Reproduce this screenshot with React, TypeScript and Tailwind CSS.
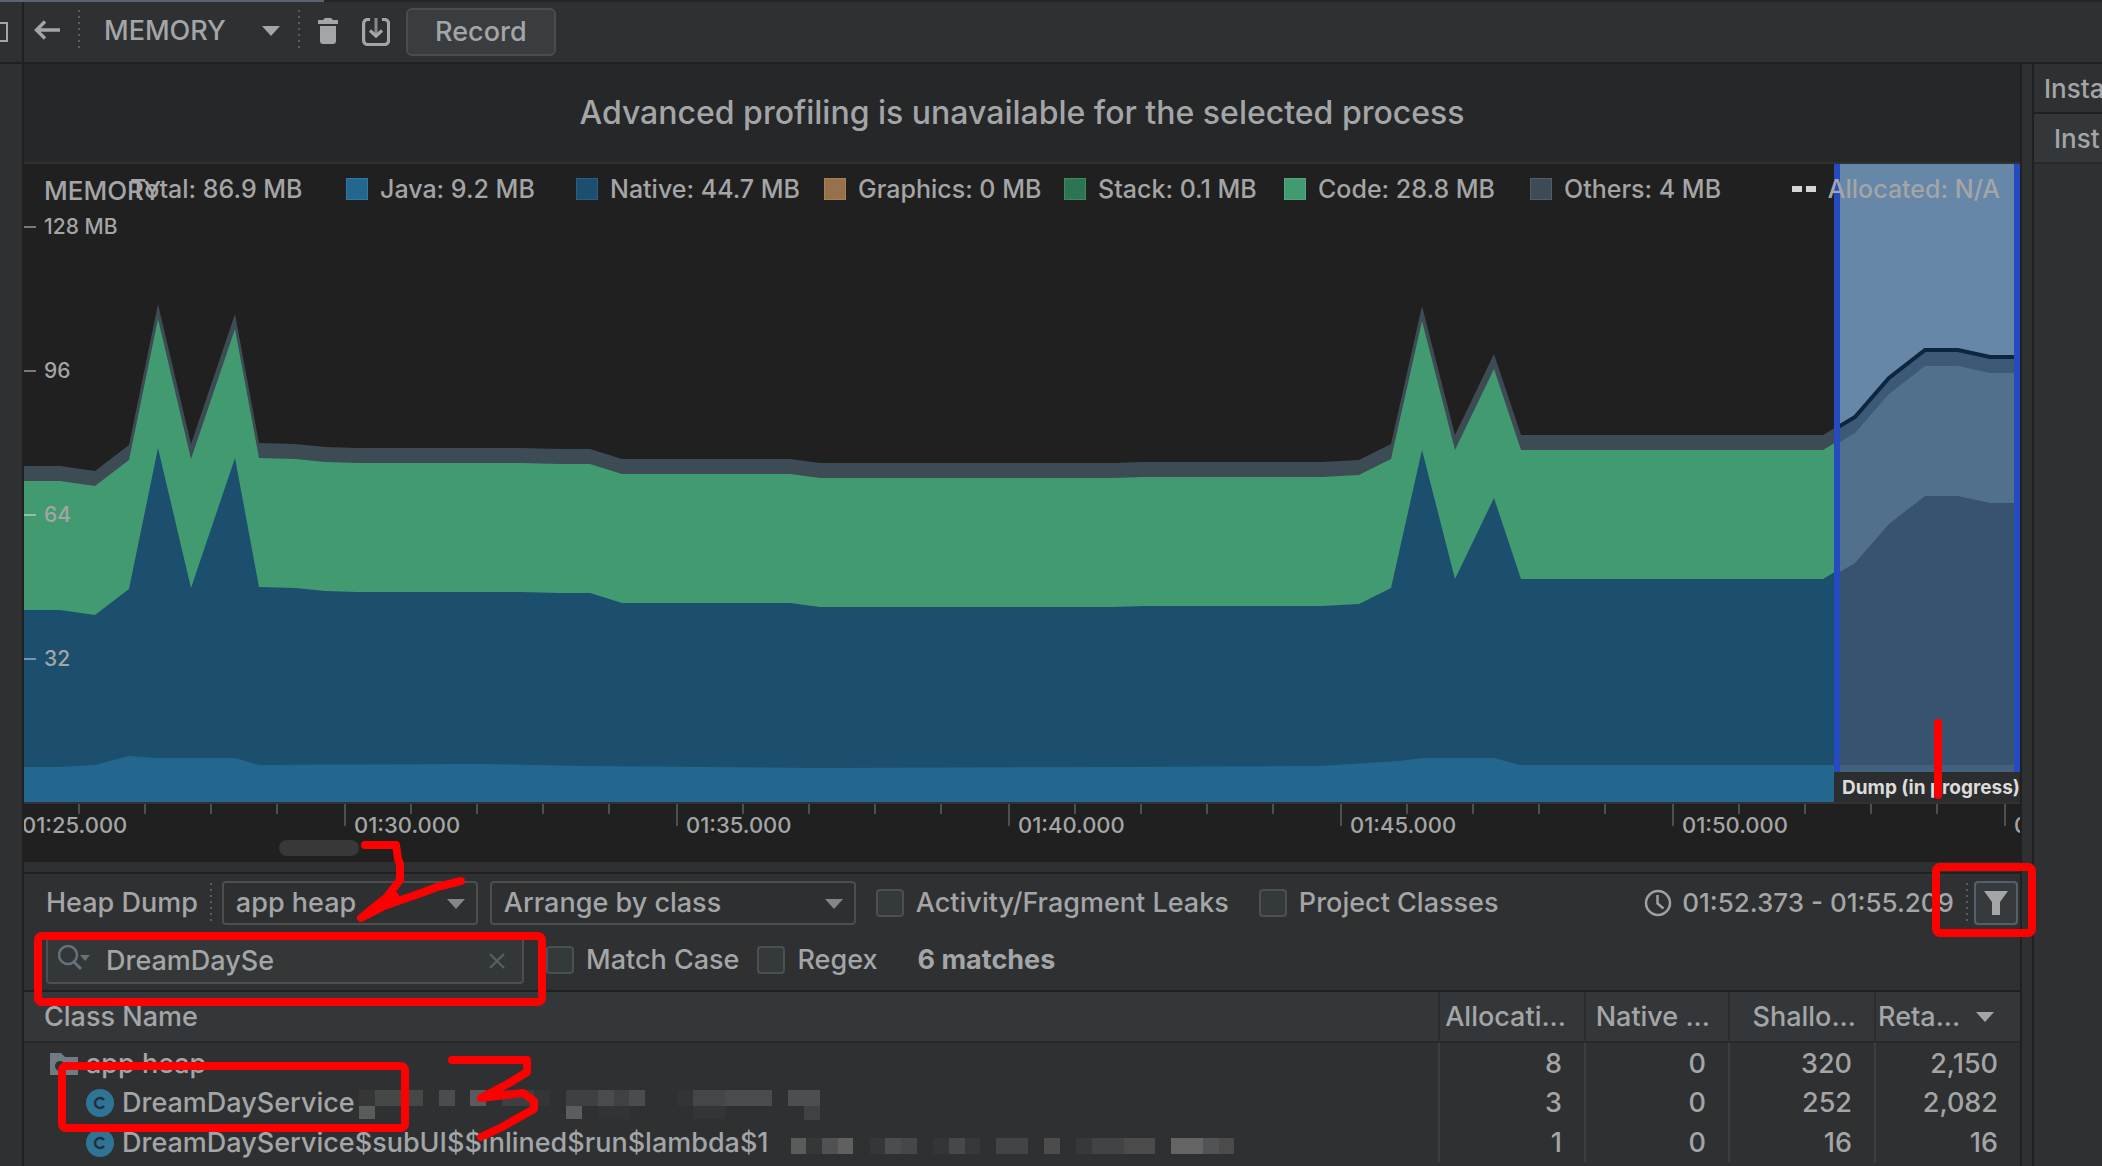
import React from "react";

type Point = [number, number];

const CHART_W = 1996;
const CHART_H = 638;

const total: Point[] = [
  [0, 302], [36, 302], [71, 307], [105, 281], [134, 140], [167, 280], [211, 150], [235, 279],
  [271, 280], [301, 283], [333, 284], [496, 284], [536, 285], [566, 285], [598, 295], [766, 295],
  [796, 299], [1089, 299], [1120, 298], [1298, 298], [1335, 296], [1367, 280], [1398, 142],
  [1431, 271], [1470, 190], [1497, 271], [1799, 271], [1831, 252], [1865, 213], [1901, 185],
  [1934, 185], [1966, 192], [1996, 192],
];

const java: Point[] = [
  [0, 603], [36, 603], [71, 601], [105, 592], [131, 594], [211, 594], [235, 601], [456, 600],
  [560, 602], [796, 604], [1106, 603], [1296, 602], [1376, 597], [1398, 594], [1470, 594],
  [1496, 601], [1996, 601],
];

const toPoints = (pts: Point[], dy = 0) => pts.map(([x, y]) => `${x},${y + dy}`).join(" ");
const toArea = (pts: Point[], dy = 0) => `0,${CHART_H} ${toPoints(pts, dy)} ${CHART_W},${CHART_H}`;

const legend = [
  { label: "Java: 9.2 MB", box: "bg-[#23678f] border-[#2d7aa6]", left: "left-[322px]" },
  { label: "Native: 44.7 MB", box: "bg-[#1c4f6e] border-[#26608a]", left: "left-[552px]" },
  { label: "Graphics: 0 MB", box: "bg-[#97714b] border-[#a88058]", left: "left-[800px]" },
  { label: "Stack: 0.1 MB", box: "bg-[#2b7553] border-[#3a8a63]", left: "left-[1040px]" },
  { label: "Code: 28.8 MB", box: "bg-[#429a70] border-[#50a97e]", left: "left-[1260px]" },
  { label: "Others: 4 MB", box: "bg-[#3d4c54] border-[#4c5f6a]", left: "left-[1506px]" },
];

function AreaChart() {
  return (
    <svg viewBox={`0 0 ${CHART_W} ${CHART_H}`} preserveAspectRatio="none" className="block h-[638px] w-full">
      <defs>
        <clipPath id="selection">
          <rect x="1810" y="0" width="186" height="608" />
        </clipPath>
      </defs>
      <polygon points={toArea(total)} fill="#3d4c54" />
      <polygon points={toArea(total, 15)} fill="#429a70" />
      <polygon points={toArea(total, 144)} fill="#1c4f6e" />
      <polygon points={toArea(java)} fill="#23678f" />
      <g clipPath="url(#selection)">
        <rect x="1810" y="0" width="186" height="608" fill="#6787a9" />
        <polygon points={toArea(total, 1)} fill="#3c5a78" />
        <polygon points={toArea(total, 17)} fill="#50708c" />
        <polygon points={toArea(total, 147)} fill="#38536f" />
        <polygon points={toArea(java)} fill="#426080" />
        <polyline points={toPoints(total, 1)} fill="none" stroke="#0c2640" strokeWidth="4" />
        <rect x="1810" y="0" width="6" height="608" fill="#244cc0" />
        <rect x="1990" y="0" width="6" height="608" fill="#244cc0" />
      </g>
    </svg>
  );
}

function Triangle({ className = "" }: { className?: string }) {
  return (
    <svg viewBox="0 0 18 10" className={`h-[10px] w-[18px] shrink-0 fill-current ${className}`}>
      <path d="M0 0h18l-9 10z" />
    </svg>
  );
}

function Dots({ className = "" }: { className?: string }) {
  return (
    <svg viewBox="0 0 2 40" className={`h-10 w-[2px] shrink-0 ${className}`}>
      <path d="M1 0v40" stroke="#5a5c5e" strokeWidth="2" strokeDasharray="2 4" />
    </svg>
  );
}

function Toolbar() {
  return (
    <header className="shrink-0 border-b-2 border-[#1f2021]">
      <div className="h-[2px] bg-[#242526]">
        <div className="h-full w-[324px] bg-[#5b6570]" />
      </div>
      <div className="flex h-[60px]">
        <div className="flex w-6 shrink-0 items-center overflow-hidden border-r-2 border-[#1f2021]">
          <svg viewBox="0 0 8 20" className="h-5 w-2">
            <path d="M0 1h7v18H0" fill="none" stroke="#a4a5a6" strokeWidth="2" />
          </svg>
        </div>
        <button aria-label="Back" className="ml-[10px] flex items-center pb-1">
          <svg viewBox="0 0 26 20" className="h-5 w-[26px]" fill="none" stroke="#a4a5a6" strokeWidth="3.4">
            <path d="M26 10H3M11 1.500L2.500 10l8.500 8.500" />
          </svg>
        </button>
        <Dots className="ml-[18px] mt-2" />
        <button className="ml-6 flex items-center gap-9 pb-[2px]">
          <span>MEMORY</span>
          <Triangle />
        </button>
        <Dots className="ml-[18px] mt-2" />
        <button aria-label="Force garbage collection" className="ml-[18px] flex items-center pb-[2px]">
          <svg viewBox="0 0 20 26" className="h-[26px] w-5" fill="#a4a5a6">
            <path d="M0 2h5l2-2h6l2 2h5v4H0zM2 8h16v15a3 3 0 0 1-3 3H5a3 3 0 0 1-3-3z" />
          </svg>
        </button>
        <button aria-label="Dump heap" className="ml-6 flex items-center">
          <svg viewBox="0 0 28 28" className="h-7 w-7" fill="none" stroke="#a4a5a6" strokeWidth="3.2">
            <path d="M8 1.500H5.500A4 4 0 0 0 1.600 5.500v17a4 4 0 0 0 4 4h17a4 4 0 0 0 4-4v-17A4 4 0 0 0 22.500 1.500H20" />
            <path d="M14 0v18" stroke="#85878a" strokeWidth="3" />
            <path d="M8 12.500l6 5.500 6-5.500" />
          </svg>
        </button>
        <button className="ml-4 mt-[6px] h-12 w-[150px] rounded-md border-2 border-[#4a4c4e] bg-[#393d3f]">Record</button>
      </div>
    </header>
  );
}

const minorTicks = [1, 2, 3, 4];
const times = ["01:25.000", "01:30.000", "01:35.000", "01:40.000", "01:45.000", "01:50.000", "01:55.000"];

function Segment({ label }: { label: string }) {
  return (
    <div className="relative h-9 w-[332px] shrink-0">
      <div className="flex h-full">
        <div className="h-[22px] w-[66px] border-l-2 border-[#4d4f50]" />
        {minorTicks.map((t) => (
          <div key={t} className="h-[10px] w-[66px] border-l-2 border-[#4d4f50]" />
        ))}
      </div>
      <span className="absolute left-[10px] top-[7px] text-[22px] leading-7">{label}</span>
    </div>
  );
}

function Timeline() {
  return (
    <div className="h-[60px] overflow-hidden border-t-2 border-[#303234] bg-[#202020]">
      <div className="-ml-3 flex">
        {times.map((t) => (
          <Segment key={t} label={t} />
        ))}
      </div>
      <div className="ml-[255px] h-4 w-20 rounded-lg bg-[#383838]" />
    </div>
  );
}

function Chart() {
  const axis = [
    { label: "128 MB", top: "top-[49px]" },
    { label: "96", top: "top-[193px]" },
    { label: "64", top: "top-[337px]" },
    { label: "32", top: "top-[481px]" },
  ];
  return (
    <div className="relative overflow-hidden bg-[#202020]">
      <AreaChart />
      <span className="absolute left-5 top-[10px] text-[26px]">MEMORY</span>
      <span className="absolute left-[106px] top-[8px] text-[25px]">Total: 86.9 MB</span>
      {legend.map((item) => (
        <div key={item.label} className={`absolute top-[8px] flex items-center gap-3 text-[25px] ${item.left}`}>
          <i className={`size-[22px] border ${item.box}`} />
          {item.label}
        </div>
      ))}
      <div className="absolute right-5 top-[8px] flex items-center gap-3 text-[25px]">
        <i className="flex gap-1">
          <b className="h-[6px] w-[10px] bg-[#d4d6d8]" />
          <b className="h-[6px] w-[10px] bg-[#d4d6d8]" />
        </i>
        Allocated: N/A
      </div>
      {axis.map((a) => (
        <div key={a.label} className={`absolute left-0 flex h-7 items-center gap-2 text-[21px] leading-7 ${a.top}`}>
          <i className="h-[2px] w-3 bg-white/40" />
          {a.label}
        </div>
      ))}
      <div className="absolute bottom-0 right-0 h-[30px] w-[186px] overflow-hidden whitespace-nowrap bg-[#2c2d2e] pl-2 text-[19px] font-bold leading-[32px] text-[#dcdcdc]">
        Dump (in progress)
      </div>
      <div className="absolute bottom-[3px] right-[78px] h-20 w-2 rounded-full bg-[#ff0000]" />
    </div>
  );
}

function Check({ label, className = "" }: { label: string; className?: string }) {
  return (
    <label className={`flex shrink-0 items-center gap-3 ${className}`}>
      <input type="checkbox" className="size-7 appearance-none rounded border-2 border-[#4d5052] bg-[#343a3a]" />
      {label}
    </label>
  );
}

function Combo({
  label,
  value,
  className = "",
  children,
}: {
  label: string;
  value: string;
  className?: string;
  children?: React.ReactNode;
}) {
  return (
    <div className={`relative shrink-0 ${className}`}>
      <select
        aria-label={label}
        className="h-11 w-full appearance-none rounded border-2 border-[#4c4e50] bg-[#2e2f31] pl-3 leading-8"
      >
        <option>{value}</option>
      </select>
      <Triangle className="pointer-events-none absolute right-[13px] top-[18px] text-[#83868c]" />
      {children}
    </div>
  );
}

function HeapBar() {
  return (
    <div className="mt-[10px] border-y-2 border-[#202122]">
      <div className="flex h-14 items-center pl-[22px] pt-[2px]">
        <span className="shrink-0">Heap Dump</span>
        <Dots className="ml-3" />
        <Combo label="Heap" value="app heap" className="ml-[10px] w-64">
          <svg
            viewBox="0 0 130 100"
            className="pointer-events-none absolute -top-[45px] left-32 z-20 h-[100px] w-[130px]"
            fill="none"
            stroke="#ff0000"
            strokeWidth="8"
            strokeLinecap="round"
            strokeLinejoin="round"
          >
            <path d="M15 9h31l2 14 2 5v16L36 62l-9 7-16 13 23-12 40-14 13-5 24-6M45 60l-16 10" />
          </svg>
        </Combo>
        <Combo label="Arrangement" value="Arrange by class" className="ml-3 w-[366px]" />
        <Check label="Activity/Fragment Leaks" className="ml-5" />
        <Check label="Project Classes" className="ml-[30px]" />
        <div className="ml-auto flex shrink-0 items-center gap-[10px] text-[26px]">
          <svg viewBox="0 0 28 28" className="size-7" fill="none" stroke="#9fa1a3" strokeWidth="2.500">
            <circle cx="14" cy="14" r="12" />
            <path d="M13.500 6v8.500l6 5" />
          </svg>
          01:52.373 - 01:55.209
        </div>
        <Dots className="ml-3" />
        <div className="relative ml-[6px] mr-[2px]">
          <button
            aria-label="Filter"
            className="flex h-11 w-11 items-center justify-center rounded border-2 border-[#56606a] bg-[#363a3d]"
          >
            <svg viewBox="0 0 26 26" className="size-[26px]" fill="#a4a5a6">
              <path d="M1 1h24l-8 11v13H9V12z" />
            </svg>
          </button>
          <div className="pointer-events-none absolute -bottom-3 -left-[42px] -right-[18px] -top-[18px] z-10 rounded-lg border-8 border-[#ff0000]" />
        </div>
      </div>
      <div className="flex h-[60px] items-center pl-[22px]">
        <div className="relative w-[478px] shrink-0">
          <svg viewBox="0 0 34 34" className="absolute left-3 top-2 size-[34px]" fill="none" stroke="#66727a" strokeWidth="2.500">
            <circle cx="10" cy="11" r="9" />
            <path d="M15 17l8 8" strokeWidth="3" />
            <path d="M22 11h10l-5 6z" fill="#66727a" stroke="none" />
          </svg>
          <input
            type="text"
            aria-label="Filter classes"
            defaultValue="DreamDaySe"
            className="h-12 w-full rounded border-2 border-[#4c4f51] bg-[#343738] pl-[58px]"
          />
          <button aria-label="Clear" className="absolute right-[19px] top-[17px]">
            <svg viewBox="0 0 16 16" className="size-4" stroke="#56616a" strokeWidth="2">
              <path d="M1 1l14 14M15 1L1 15" />
            </svg>
          </button>
          <div className="pointer-events-none absolute -bottom-[22px] -left-3 -right-[22px] -top-1 z-10 rounded-lg border-8 border-[#ff0000]" />
        </div>
        <Check label="Match Case" className="ml-[22px]" />
        <Check label="Regex" className="ml-[18px]" />
        <strong className="ml-10 font-bold">6 matches</strong>
      </div>
    </div>
  );
}

function ClassIcon() {
  return (
    <svg viewBox="0 0 28 28" className="size-7 shrink-0">
      <circle cx="14" cy="14" r="14" fill="#2f7495" />
      <path d="M18 11a5 5 0 1 0 0 6" fill="none" stroke="#20323c" strokeWidth="2.500" />
    </svg>
  );
}

function FolderIcon() {
  return (
    <svg viewBox="0 0 28 22" className="h-[22px] w-7 shrink-0">
      <path d="M0 0h11l4 4h13v18H0z" fill="#6f7c86" />
      <circle cx="10" cy="13" r="5" fill="#2e3032" />
    </svg>
  );
}

type Block = [x: number, y: number, w: number, h: number, fill: string];

const serviceMask: Block[] = [
  [0, 0, 16, 16, "#343638"], [16, 0, 48, 16, "#464747"], [80, 0, 16, 16, "#4b4c4d"], [111, 0, 16, 16, "#5a5b5c"],
  [143, 0, 32, 16, "#3e3f41"], [175, 0, 16, 16, "#343537"], [207, 0, 32, 16, "#3f4041"], [239, 0, 16, 16, "#4a4b4c"],
  [255, 0, 16, 16, "#404142"], [270, 0, 16, 16, "#4b4c4d"], [318, 0, 16, 16, "#333436"], [334, 0, 32, 16, "#454648"],
  [366, 0, 47, 16, "#4a4b4d"], [429, 0, 32, 16, "#4d4e50"], [0, 16, 16, 13, "#5a5b5b"], [207, 16, 16, 13, "#5c5d5f"],
  [239, 16, 32, 13, "#323335"], [334, 16, 32, 13, "#343537"], [445, 16, 16, 15, "#404143"],
];

const lambdaMask: Block[] = [
  [0, 0, 15, 16, "#5a5b5b"], [15, 0, 16, 16, "#353638"], [31, 0, 16, 16, "#505152"], [47, 0, 15, 16, "#606060"],
  [79, 0, 15, 16, "#353637"], [94, 0, 16, 16, "#4c4d4f"], [110, 0, 16, 16, "#46474a"], [142, 0, 16, 16, "#343537"],
  [158, 0, 16, 16, "#47484a"], [174, 0, 15, 16, "#37383a"], [205, 0, 32, 16, "#434446"], [253, 0, 16, 16, "#4b4c4b"],
  [285, 0, 16, 16, "#373839"], [301, 0, 32, 16, "#424344"], [333, 0, 31, 16, "#4a4b4a"], [380, 0, 32, 16, "#646464"],
  [412, 0, 16, 16, "#525355"], [428, 0, 15, 16, "#4a4b4a"],
];

function Mask({ blocks, height, className }: { blocks: Block[]; height: number; className: string }) {
  return (
    <svg
      viewBox={`0 0 464 ${height}`}
      width="464"
      height={height}
      className={`shrink-0 ${className}`}
      shapeRendering="crispEdges"
    >
      {blocks.map(([x, y, w, h, fill]) => (
        <rect key={`${x}-${y}`} x={x} y={y} width={w} height={h} fill={fill} />
      ))}
    </svg>
  );
}

const columns = ["w-[146px]", "w-36", "w-[146px]", "w-[145px]"];

function Row({ values, className, children }: { values: string[]; className: string; children: React.ReactNode }) {
  return (
    <tr className="h-10">
      <td className={`relative pt-[2px] ${className}`}>{children}</td>
      {values.map((v, i) => (
        <td key={i} className="border-l-2 border-[#3b3d3f] pr-[22px] pt-[2px] text-right">
          {v}
        </td>
      ))}
    </tr>
  );
}

function ClassTable() {
  const head = "border-l-2 border-[#2a2c2e] font-medium";
  return (
    <table className="w-full table-fixed border-collapse">
      <colgroup>
        <col />
        {columns.map((c, i) => (
          <col key={i} className={c} />
        ))}
      </colgroup>
      <thead>
        <tr className="h-[50px] border-b-2 border-[#27292a] bg-[#343739]">
          <th className="pl-5 text-left font-medium">Class Name</th>
          <th className={`pr-[18px] text-right ${head}`}>Allocati...</th>
          <th className={`pr-[18px] text-right ${head}`}>Native ...</th>
          <th className={`pr-[18px] text-right ${head}`}>Shallo...</th>
          <th className={head}>
            <div className="flex items-center gap-4 pl-[2px]">
              Reta...
              <Triangle />
            </div>
          </th>
        </tr>
      </thead>
      <tbody>
        <Row values={["8", "0", "320", "2,150"]} className="pl-[26px]">
          <div className="flex items-center gap-2">
            <FolderIcon />
            app heap
          </div>
        </Row>
        <Row values={["3", "0", "252", "2,082"]} className="pl-[62px]">
          <div className="flex items-center gap-2">
            <ClassIcon />
            DreamDayService
            <Mask blocks={serviceMask} height={30} className="-ml-1 mt-1" />
          </div>
          <div className="pointer-events-none absolute -top-5 left-[34px] z-10 h-[70px] w-[351px] rounded-lg border-8 border-[#ff0000]" />
          <svg
            viewBox="0 0 100 90"
            className="pointer-events-none absolute -top-[28px] left-[420px] z-10 h-[90px] w-[100px]"
            fill="none"
            stroke="#ff0000"
            strokeWidth="8"
            strokeLinecap="round"
            strokeLinejoin="round"
          >
            <path d="M8 6h75v12l-16 10-30 16 42-5 11 8v8L58 73l-21 10" />
          </svg>
        </Row>
        <Row values={["1", "0", "16", "16"]} className="pl-[62px]">
          <div className="flex items-center gap-2">
            <ClassIcon />
            DreamDayService$subUI$$inlined$run$lambda$1
            <Mask blocks={lambdaMask} height={16} className="ml-[14px] mt-[6px]" />
          </div>
        </Row>
      </tbody>
    </table>
  );
}

export default function App() {
  return (
    <div className="flex h-screen flex-col overflow-hidden whitespace-nowrap bg-[#2e3032] font-['Inter',sans-serif] text-[27px] font-medium leading-[34px] text-[#a4a5a6]">
      <Toolbar />
      <div className="flex min-h-0 flex-1">
        <div className="w-6 shrink-0 border-r-2 border-[#1f2021]" />
        <main className="min-w-0 flex-1 border-r-2 border-[#1f2021]">
          <div className="flex h-[100px] items-center justify-center border-b-2 border-[#2f3133] bg-[#262729] text-[32px]">
            Advanced profiling is unavailable for the selected process
          </div>
          <Chart />
          <Timeline />
          <HeapBar />
          <ClassTable />
        </main>
        <aside className="ml-[10px] w-[70px] shrink-0 overflow-hidden border-l-2 border-[#1f2021]">
          <div className="h-[50px] border-b-2 border-[#1f2021] pl-[10px] pt-2 text-[26px]">Insta</div>
          <div className="h-[50px] border-b-2 border-[#27292a] bg-[#343739] pl-5 pt-2 text-[26px]">Inst</div>
        </aside>
      </div>
    </div>
  );
}
